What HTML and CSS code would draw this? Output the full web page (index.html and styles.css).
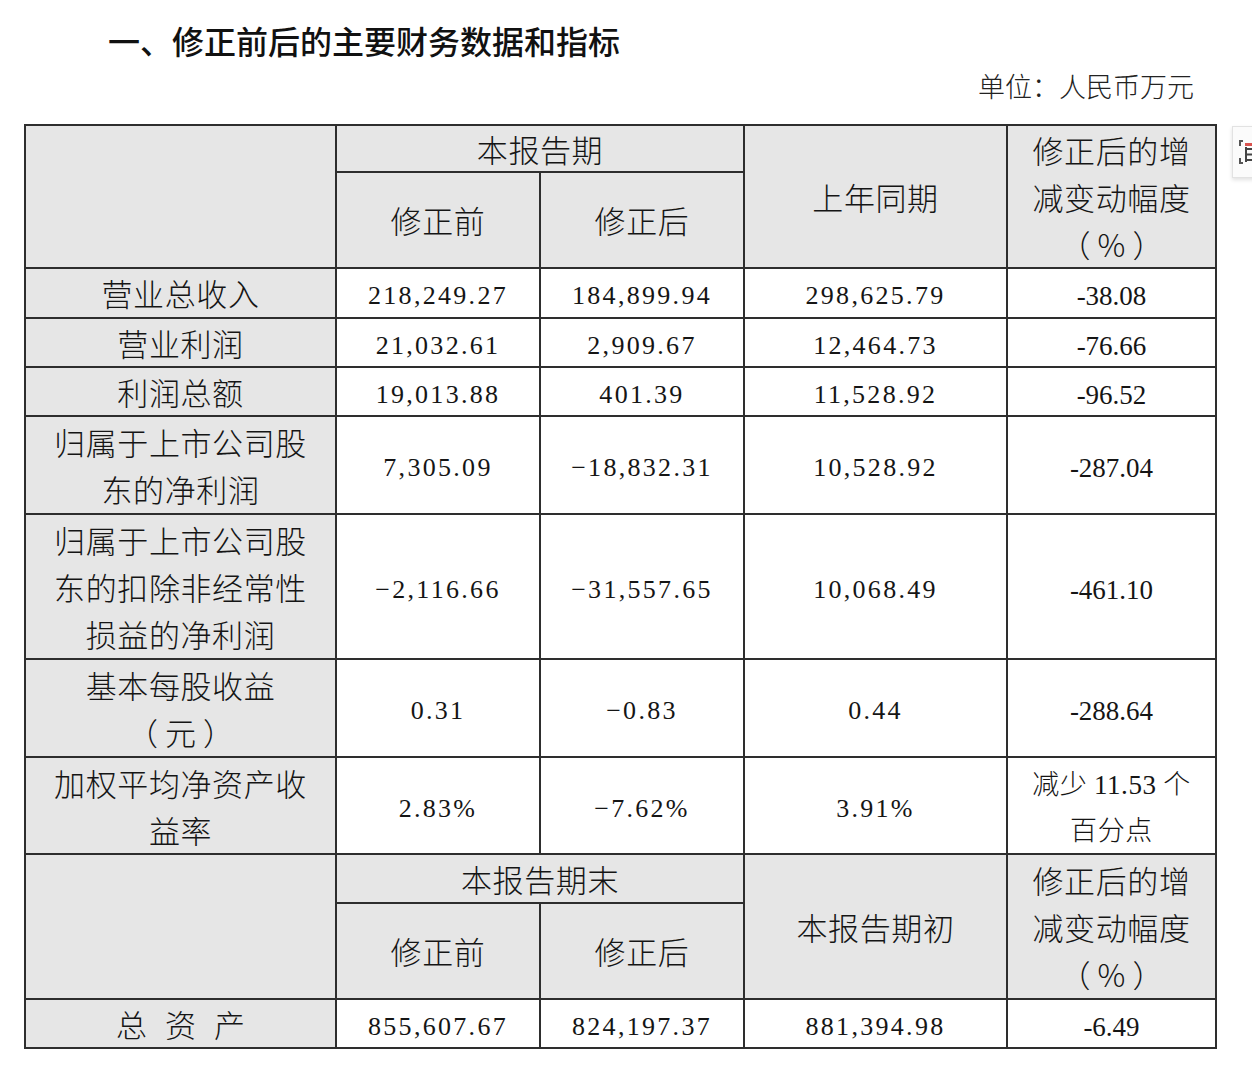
FILE: index.html
```html
<!DOCTYPE html>
<html lang="zh-CN">
<head>
<meta charset="utf-8">
<title>修正前后的主要财务数据和指标</title>
<link rel="stylesheet" href="styles.css">
</head>
<body>
<div class="page">
  <h1 class="title">一、修正前后的主要财务数据和指标</h1>
  <div class="unit">单位：人民币万元</div>
  <table class="fin">
    <colgroup>
      <col class="c-label"><col class="c-mid"><col class="c-mid"><col class="c-prev"><col class="c-chg">
    </colgroup>
    <tr class="hh1">
      <td class="hd" rowspan="2"></td>
      <td class="hd" colspan="2">本报告期</td>
      <td class="hd" rowspan="2">上年同期</td>
      <td class="hd ml" rowspan="2">修正后的增<br>减变动幅度<br><span class="paren">（%）</span></td>
    </tr>
    <tr class="hh2">
      <td class="hd">修正前</td>
      <td class="hd">修正后</td>
    </tr>
    <tr class="h50">
      <td class="lb">营业总收入</td>
      <td class="nm">218,249.27</td>
      <td class="nm">184,899.94</td>
      <td class="nm">298,625.79</td>
      <td class="pc">-38.08</td>
    </tr>
    <tr class="h49">
      <td class="lb">营业利润</td>
      <td class="nm">21,032.61</td>
      <td class="nm">2,909.67</td>
      <td class="nm">12,464.73</td>
      <td class="pc">-76.66</td>
    </tr>
    <tr class="h49">
      <td class="lb">利润总额</td>
      <td class="nm">19,013.88</td>
      <td class="nm">401.39</td>
      <td class="nm">11,528.92</td>
      <td class="pc">-96.52</td>
    </tr>
    <tr class="h98">
      <td class="lb ml">归属于上市公司股<br>东的净利润</td>
      <td class="nm">7,305.09</td>
      <td class="nm">−18,832.31</td>
      <td class="nm">10,528.92</td>
      <td class="pc">-287.04</td>
    </tr>
    <tr class="h145">
      <td class="lb ml">归属于上市公司股<br>东的扣除非经常性<br>损益的净利润</td>
      <td class="nm">−2,116.66</td>
      <td class="nm">−31,557.65</td>
      <td class="nm">10,068.49</td>
      <td class="pc">-461.10</td>
    </tr>
    <tr class="h98">
      <td class="lb ml">基本每股收益<br><span class="paren">（元）</span></td>
      <td class="nm">0.31</td>
      <td class="nm">−0.83</td>
      <td class="nm">0.44</td>
      <td class="pc">-288.64</td>
    </tr>
    <tr class="h97">
      <td class="lb ml">加权平均净资产收<br>益率</td>
      <td class="nm">2.83%</td>
      <td class="nm">−7.62%</td>
      <td class="nm">3.91%</td>
      <td class="cn">减少 <span class="tnr">11.53</span> 个<br>百分点</td>
    </tr>
    <tr class="hh1b">
      <td class="hd" rowspan="2"></td>
      <td class="hd" colspan="2">本报告期末</td>
      <td class="hd" rowspan="2">本报告期初</td>
      <td class="hd ml" rowspan="2">修正后的增<br>减变动幅度<br><span class="paren">（%）</span></td>
    </tr>
    <tr class="hh2b">
      <td class="hd">修正前</td>
      <td class="hd">修正后</td>
    </tr>
    <tr class="h49">
      <td class="lb spaced">总资产</td>
      <td class="nm">855,607.67</td>
      <td class="nm">824,197.37</td>
      <td class="nm">881,394.98</td>
      <td class="pc">-6.49</td>
    </tr>
  </table>
  <div class="side-widget" aria-hidden="true">
    <svg width="20" height="28" viewBox="0 0 20 28">
      <path d="M6 3 H3 V8 M3 20 V25 H6" fill="none" stroke="#555" stroke-width="2"/>
      <rect x="8" y="5" width="12" height="3" fill="#d9534f"/>
      <path d="M9 9 V24 M9 11 H20 M9 16.5 H20 M9 22 H20" fill="none" stroke="#444" stroke-width="2"/>
    </svg>
  </div>
</div>
</body>
</html>
```

FILE: styles.css
```css
html, body {
  margin: 0;
  padding: 0;
  background: #ffffff;
}

body {
  font-family: "Noto Sans CJK SC", "Liberation Serif", sans-serif;
  color: #151515;
}

.page {
  position: relative;
  width: 1252px;
  min-height: 1082px;
  padding-top: 16px;
  box-sizing: border-box;
}

.title {
  margin: 0 0 0 108px;
  font-size: 32px;
  line-height: 48px;
  font-weight: 500;
  letter-spacing: 0;
  color: #111;
}

.unit {
  text-align: right;
  padding-right: 58px;
  font-size: 27px;
  line-height: 44px;
  font-weight: 300;
  color: #222;
}

.fin {
  margin: 16px 0 0 24px;
  border-collapse: collapse;
  table-layout: fixed;
  width: 1191px;
}

.c-label { width: 311px; }
.c-mid { width: 204px; }
.c-prev { width: 263px; }
.c-chg { width: 209px; }

.fin td {
  border: 2px solid #2e2e2e;
  padding: 0;
  text-align: center;
  vertical-align: middle;
  line-height: 44px;
  font-size: 31px;
  font-weight: 300;
  letter-spacing: 0.6px;
  white-space: nowrap;
  overflow: hidden;
}

.fin td.ml {
  line-height: 47px;
}

.hh1 { height: 47px; }
.hh1b { height: 49px; }
.hh2 { height: 95px; }
.hh2b { height: 96px; }
.h49 { height: 49px; }
.h50 { height: 50px; }
.h97 { height: 97px; }
.h98 { height: 98px; }
.h145 { height: 145px; }

.fin td.hd,
.fin td.lb {
  background: #e6e6e6;
}

.paren {
  letter-spacing: 7px;
  padding-left: 7px;
}

.fin td.nm {
  font-family: "Liberation Serif", "Noto Sans CJK SC", serif;
  font-size: 26px;
  line-height: 38px;
  letter-spacing: 2.3px;
  font-weight: 400;
  padding-top: 6px;
}

.fin td.pc {
  font-family: "Liberation Serif", serif;
  font-size: 27px;
  line-height: 38px;
  letter-spacing: 0;
  font-weight: 400;
  padding-top: 6px;
}

.fin td.cn {
  font-size: 27px;
  line-height: 46px;
}

.tnr {
  font-family: "Liberation Serif", serif;
  font-size: 27px;
  font-weight: 400;
  line-height: 1;
}

.fin td.spaced {
  letter-spacing: 18px;
  text-indent: 18px;
}

.side-widget {
  position: absolute;
  left: 1232px;
  top: 126px;
  width: 30px;
  height: 52px;
  background: #fbfbfb;
  border: 1px solid #e2e2e2;
  box-shadow: 0 2px 4px rgba(0, 0, 0, 0.12);
  display: flex;
  align-items: center;
  padding-left: 4px;
  box-sizing: border-box;
}
```
